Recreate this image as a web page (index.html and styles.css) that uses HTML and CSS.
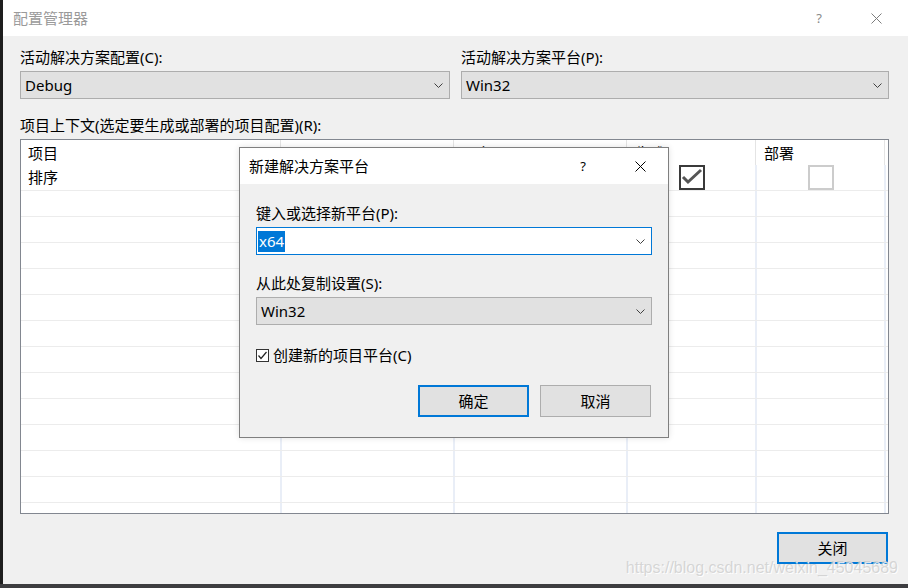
FILE: index.html
```html
<!DOCTYPE html>
<html lang="zh-CN">
<head>
<meta charset="utf-8">
<title>配置管理器</title>
<link rel="stylesheet" href="styles.css">
</head>
<body>
<div class="screen">
  <div class="window">
    <div class="titlebar">
      <span class="title">配置管理器</span>
      <div class="caption-btns">
        <span class="help">?</span>
        <svg class="xicon" width="11" height="11" viewBox="0 0 11 11"><path d="M0.5 0.5 L10.5 10.5 M10.5 0.5 L0.5 10.5" /></svg>
      </div>
    </div>
    <div class="content">
      <div class="top-row">
        <div class="field">
          <div class="lbl">活动解决方案配置(C):</div>
          <div class="combo"><span class="val">Debug</span><svg class="chev" width="9" height="5" viewBox="0 0 9 5"><polyline points="0.5,0.5 4.5,4.5 8.5,0.5"/></svg></div>
        </div>
        <div class="field">
          <div class="lbl">活动解决方案平台(P):</div>
          <div class="combo"><span class="val">Win32</span><svg class="chev" width="9" height="5" viewBox="0 0 9 5"><polyline points="0.5,0.5 4.5,4.5 8.5,0.5"/></svg></div>
        </div>
      </div>
      <div class="lbl ctx">项目上下文(选定要生成或部署的项目配置)(R):</div>
      <div class="grid">
        <div class="row head">
          <div class="cell">项目</div>
          <div class="cell">配置</div>
          <div class="cell">平台</div>
          <div class="cell">生成</div>
          <div class="cell">部署</div>
          <div class="cell rest"></div>
        </div>
        <div class="row">
          <div class="cell">排序</div>
          <div class="cell"></div>
          <div class="cell"></div>
          <div class="cell center"><span class="gbox on"><svg width="22" height="21" viewBox="0 0 22 21"><polyline points="2,10 7,15 20,3"/></svg></span></div>
          <div class="cell center"><span class="gbox"></span></div>
          <div class="cell rest"></div>
        </div>
        <div class="row"><div class="cell"></div><div class="cell"></div><div class="cell"></div><div class="cell"></div><div class="cell"></div><div class="cell rest"></div></div>
        <div class="row"><div class="cell"></div><div class="cell"></div><div class="cell"></div><div class="cell"></div><div class="cell"></div><div class="cell rest"></div></div>
        <div class="row"><div class="cell"></div><div class="cell"></div><div class="cell"></div><div class="cell"></div><div class="cell"></div><div class="cell rest"></div></div>
        <div class="row"><div class="cell"></div><div class="cell"></div><div class="cell"></div><div class="cell"></div><div class="cell"></div><div class="cell rest"></div></div>
        <div class="row"><div class="cell"></div><div class="cell"></div><div class="cell"></div><div class="cell"></div><div class="cell"></div><div class="cell rest"></div></div>
        <div class="row"><div class="cell"></div><div class="cell"></div><div class="cell"></div><div class="cell"></div><div class="cell"></div><div class="cell rest"></div></div>
        <div class="row"><div class="cell"></div><div class="cell"></div><div class="cell"></div><div class="cell"></div><div class="cell"></div><div class="cell rest"></div></div>
        <div class="row"><div class="cell"></div><div class="cell"></div><div class="cell"></div><div class="cell"></div><div class="cell"></div><div class="cell rest"></div></div>
        <div class="row"><div class="cell"></div><div class="cell"></div><div class="cell"></div><div class="cell"></div><div class="cell"></div><div class="cell rest"></div></div>
        <div class="row"><div class="cell"></div><div class="cell"></div><div class="cell"></div><div class="cell"></div><div class="cell"></div><div class="cell rest"></div></div>
        <div class="row"><div class="cell"></div><div class="cell"></div><div class="cell"></div><div class="cell"></div><div class="cell"></div><div class="cell rest"></div></div>
        <div class="row"><div class="cell"></div><div class="cell"></div><div class="cell"></div><div class="cell"></div><div class="cell"></div><div class="cell rest"></div></div>
        <div class="row"><div class="cell"></div><div class="cell"></div><div class="cell"></div><div class="cell"></div><div class="cell"></div><div class="cell rest"></div></div>
      </div>
      <div class="footer">
        <button class="btn primary close-btn">关闭</button>
      </div>
    </div>
  </div>
  <div class="taskbar"></div>

  <div class="dialog">
    <div class="dlg-title">
      <span class="dlg-caption">新建解决方案平台</span>
      <div class="caption-btns dlg-btns">
        <span class="help">?</span>
        <svg class="xicon" width="11" height="11" viewBox="0 0 11 11"><path d="M0.5 0.5 L10.5 10.5 M10.5 0.5 L0.5 10.5" /></svg>
      </div>
    </div>
    <div class="dlg-body">
      <div class="lbl">键入或选择新平台(P):</div>
      <div class="combo edit"><span class="val"><span class="sel">x64</span></span><svg class="chev" width="9" height="5" viewBox="0 0 9 5"><polyline points="0.5,0.5 4.5,4.5 8.5,0.5"/></svg></div>
      <div class="lbl dlg-lbl2">从此处复制设置(S):</div>
      <div class="combo"><span class="val">Win32</span><svg class="chev" width="9" height="5" viewBox="0 0 9 5"><polyline points="0.5,0.5 4.5,4.5 8.5,0.5"/></svg></div>
      <div class="check-row">
        <span class="cbox"><svg width="11" height="11" viewBox="0 0 11 11"><polyline points="1.5,5.5 4,8.5 9.5,2"/></svg></span>
        <span class="lbl">创建新的项目平台(C)</span>
      </div>
      <div class="dlg-buttons">
        <button class="btn primary">确定</button>
        <button class="btn">取消</button>
      </div>
    </div>
  </div>

  <div class="watermark">https://blog.csdn.net/weixin_45045689</div>
</div>
</body>
</html>
```

FILE: styles.css
```css
* { box-sizing: border-box; }

html, body {
  margin: 0;
  padding: 0;
  background: #1e1e1e;
}

body {
  font-family: "Noto Sans", "Noto Sans CJK SC", sans-serif;
  font-size: 15px;
  color: #000;
}

.screen {
  position: relative;
  width: 908px;
  height: 588px;
  display: flex;
  flex-direction: column;
  overflow: hidden;
}

.window {
  flex: 1;
  display: flex;
  flex-direction: column;
  border-left: 3px solid #1e1e1e;
  background: #f0f0f0;
}

.taskbar {
  height: 4px;
  background: #3d3d40;
}

.titlebar {
  height: 36px;
  background: #fff;
  display: flex;
  align-items: center;
  padding-left: 10px;
}

.title {
  font-size: 15px;
  color: #9a9a9a;
  line-height: 20px;
}

.caption-btns {
  margin-left: auto;
  display: flex;
  align-items: center;
  gap: 37px;
  margin-right: 21px;
}

.help {
  width: 20px;
  text-align: center;
  font-size: 13px;
  line-height: 16px;
  color: #8a8a8a;
}

.xicon {
  display: block;
  margin: 0 5px;
}

.xicon path {
  stroke: #7c7c7c;
  stroke-width: 1;
  fill: none;
}

.content {
  flex: 1;
  display: flex;
  flex-direction: column;
  padding: 11px 19px 0 17px;
}

.top-row {
  display: grid;
  grid-template-columns: 430px 428px;
  column-gap: 11px;
}

.lbl {
  font-size: 15px;
  line-height: 20px;
  white-space: nowrap;
}

.combo {
  margin-top: 4px;
  height: 28px;
  background: #e1e1e1;
  border: 1px solid #adadad;
  display: flex;
  align-items: center;
  padding: 0 6px 0 4px;
}

.combo .val {
  flex: 1;
  font-size: 15px;
  line-height: 20px;
}

.chev {
  display: block;
}

.chev polyline {
  fill: none;
  stroke: #404040;
  stroke-width: 1;
}

.ctx {
  margin-top: 16px;
}

.grid {
  margin-top: 4px;
  height: 375px;
  background: #fff;
  border: 1px solid #828790;
  overflow: hidden;
}

.row {
  display: grid;
  grid-template-columns: 261px 173px 173px 129px 129px 1fr;
  height: 26px;
  border-bottom: 1px solid #ececec;
}

.row.head {
  height: 25px;
  border-bottom: none;
}

.cell {
  border-right: 2px solid #e9eef7;
  padding-left: 7px;
  font-size: 15px;
  line-height: 25px;
  white-space: nowrap;
  overflow: hidden;
}

.row.head .cell {
  border-right: 1px solid #e4e4e4;
  margin-right: 1px;
  line-height: 26px;
}

.cell.rest {
  border-right: none;
  margin-right: 0;
}

.cell.center {
  padding-left: 0;
  display: flex;
  justify-content: center;
  align-items: flex-start;
}

.gbox {
  display: block;
  width: 26px;
  height: 25px;
  border: 2px solid #cccccc;
  background: #fff;
}

.gbox.on {
  border-color: #3a3a3a;
}

.gbox svg {
  display: block;
}

.gbox polyline {
  fill: none;
  stroke: #555;
  stroke-width: 3;
}

.footer {
  flex: 1;
  display: flex;
  justify-content: flex-end;
  align-items: flex-start;
  padding-top: 18px;
}

.btn {
  width: 111px;
  height: 32px;
  background: #e1e1e1;
  border: 1px solid #adadad;
  font-family: "Noto Sans", "Noto Sans CJK SC", sans-serif;
  font-size: 15px;
  color: #000;
  padding: 0;
  line-height: 20px;
}

.btn.primary {
  border: 2px solid #0078d7;
}

.close-btn {
  margin-right: 1px;
}

/* dialog overlay */
.dialog {
  position: absolute;
  left: 239px;
  top: 147px;
  width: 430px;
  height: 291px;
  background: #f0f0f0;
  border: 1px solid #7f7f7f;
  display: flex;
  flex-direction: column;
  box-shadow: 0 0 6px rgba(0, 0, 0, 0.12);
}

.dlg-title {
  height: 36px;
  background: #fff;
  display: flex;
  align-items: center;
  padding-left: 9px;
}

.dlg-caption {
  font-size: 15px;
  line-height: 20px;
}

.dlg-btns {
  margin-right: 17px;
}

.dlg-btns .help {
  color: #000;
}

.dlg-btns .xicon path {
  stroke: #000;
}

.dlg-body {
  padding: 19px 16px 0 16px;
  display: flex;
  flex-direction: column;
}

.combo.edit {
  background: #fff;
  border-color: #0078d7;
  padding-left: 1px;
}

.sel {
  background: #0078d7;
  color: #fff;
  padding: 0 1px;
  display: inline-block;
  line-height: 21px;
}

.dlg-lbl2 {
  margin-top: 18px;
}

.check-row {
  margin-top: 20px;
  display: flex;
  align-items: center;
  gap: 4px;
  height: 20px;
}

.cbox {
  display: block;
  width: 13px;
  height: 13px;
  border: 1px solid #333;
  background: #fff;
}

.cbox svg {
  display: block;
}

.cbox polyline {
  fill: none;
  stroke: #222;
  stroke-width: 1.2;
}

.dlg-buttons {
  margin-top: 20px;
  display: flex;
  justify-content: flex-end;
  gap: 11px;
  padding-right: 1px;
}

.watermark {
  position: absolute;
  right: 10px;
  top: 558px;
  font-family: "Liberation Sans", Arial, sans-serif;
  font-size: 16px;
  line-height: 20px;
  color: rgba(200, 200, 200, 0.7);
  text-shadow: 1px 1px 0 rgba(255, 255, 255, 0.9);
  white-space: nowrap;
}
```
